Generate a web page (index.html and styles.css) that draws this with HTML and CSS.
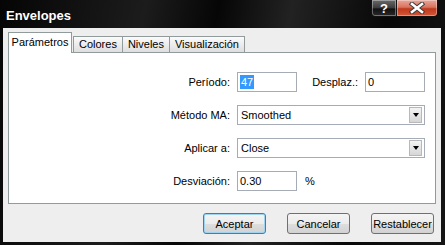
FILE: index.html
```html
<!DOCTYPE html>
<html>
<head>
    <title>Envelopes</title>
    <meta charset="UTF-8">
    <link rel="stylesheet" href="styles.css">
</head>
<body>
    <div class="window">
        <div class="titlebar">
            <span class="title">Envelopes</span>
            <div class="caption-btns">
                <span class="cap-btn help">?</span>
                <span class="cap-btn close">
                    <svg width="16" height="12" viewBox="0 0 16 12">
                        <path d="M3 2 L13 10 M13 2 L3 10" stroke="#3a3a3a" stroke-width="4.5" stroke-linecap="square"/>
                        <path d="M3 2 L13 10 M13 2 L3 10" stroke="#ffffff" stroke-width="2.6" stroke-linecap="square"/>
                    </svg>
                </span>
            </div>
        </div>

        <div class="client">
            <div class="tabs">
                <span class="tab active">Parámetros</span>
                <span class="tab">Colores</span>
                <span class="tab">Niveles</span>
                <span class="tab">Visualización</span>
            </div>

            <div class="panel">
                <div class="row">
                    <label class="lbl">Período:</label>
                    <div class="field short"><span class="sel">47</span></div>
                    <label class="lbl lbl-mid">Desplaz.:</label>
                    <div class="field short">0</div>
                </div>
                <div class="row">
                    <label class="lbl">Método MA:</label>
                    <div class="field combo">
                        <span class="combo-text">Smoothed</span>
                        <span class="arrow"></span>
                    </div>
                </div>
                <div class="row">
                    <label class="lbl">Aplicar a:</label>
                    <div class="field combo">
                        <span class="combo-text">Close</span>
                        <span class="arrow"></span>
                    </div>
                </div>
                <div class="row">
                    <label class="lbl">Desviación:</label>
                    <div class="field short">0.30</div>
                    <span class="unit">%</span>
                </div>
            </div>

            <div class="actions">
                <button class="btn default">Aceptar</button>
                <button class="btn">Cancelar</button>
                <button class="btn">Restablecer</button>
            </div>
        </div>
    </div>
</body>
</html>
```

FILE: styles.css
```css
body { margin: 0; font-family: "Liberation Sans", Arial, sans-serif; font-size: 11px; color: #000; }

.window { width: 445px; height: 245px; box-sizing: border-box; display: flex; flex-direction: column; padding: 0 4px 3px 3px; background: linear-gradient(100deg, #050505 0%, #1c1c1c 30%, #060606 45%, #222 60%, #080808 80%, #151515 100%); }

.titlebar { height: 28px; flex-shrink: 0; display: flex; justify-content: space-between; align-items: flex-start; }
.title { color: #fff; font-weight: bold; font-size: 13px; margin: 8px 0 0 3px; }
.caption-btns { display: flex; margin-right: 3px; }
.cap-btn { height: 17px; box-sizing: border-box; display: flex; align-items: center; justify-content: center; border: 1px solid #111; border-top: none; box-shadow: inset 0 0 0 1px rgba(255,255,255,0.35); }
.help { width: 26px; border-bottom-left-radius: 4px; color: #fff; font-weight: bold; font-size: 13px; background: linear-gradient(#6a6a6a 0%, #3a3a3a 50%, #101010 55%, #2a2a2a 100%); }
.close { width: 41px; border-left: none; border-bottom-right-radius: 4px; background: linear-gradient(#e9a699 0%, #d9735f 45%, #c0391c 55%, #d2583a 100%); }

.client { flex: 1; background: #eeeeee; padding: 5px 5px 0 5px; display: flex; flex-direction: column; }

.tabs { display: flex; align-items: flex-end; height: 19px; }
.tab { height: 15px; line-height: 15px; padding: 0 5px; border: 1px solid #919b9c; border-bottom: none; margin-left: -1px; background: linear-gradient(#fbfbfb, #dedede); }
.tab.active { height: 20px; line-height: 18px; width: 62px; padding: 0; text-align: center; margin: 0 2px -1px 0; background: #fff; position: relative; z-index: 1; }

.panel { height: 152px; box-sizing: border-box; background: #fff; border: 1px solid #919b9c; padding-top: 19px; display: flex; flex-direction: column; gap: 13px; }
.row { display: flex; align-items: center; height: 20px; }
.lbl { width: 221px; margin-right: 7px; text-align: right; }
.lbl-mid { width: 61px; }

.field { height: 20px; box-sizing: border-box; border: 1px solid #a5acb5; background: #fff; padding: 0 2px; line-height: 18px; display: flex; align-items: center; }
.short { width: 60px; }
.sel { background: #3399ff; color: #fff; padding: 0 1px; line-height: 14px; }
.unit { margin-left: 8px; }

.combo { width: 188px; justify-content: space-between; padding: 0 2px 0 3px; }
.arrow { width: 13px; height: 16px; box-sizing: border-box; border: 1px solid #b8b8b8; background: linear-gradient(#f4f4f4, #d6d6d6); display: flex; align-items: center; justify-content: center; }
.arrow::after { content: ""; border-left: 3.5px solid transparent; border-right: 3.5px solid transparent; border-top: 4px solid #000; }

.actions { display: flex; justify-content: flex-end; gap: 21px; margin: 9px 2px 0 0; }
.btn { width: 63px; height: 21px; padding: 0; font-family: inherit; font-size: 11px; color: #000; border: 1px solid #707070; border-radius: 3px; background: linear-gradient(#f4f4f4 0%, #ececec 50%, #dedede 51%, #d2d2d2 100%); }
.btn.default { border-color: #3c7fb1; box-shadow: inset 0 0 0 1px #9fd3f0; }
```
